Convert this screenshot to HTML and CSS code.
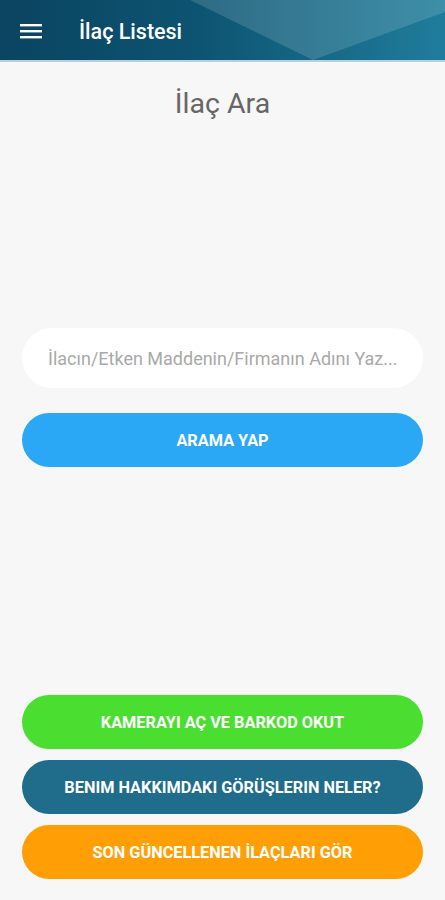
FILE: index.html
```html
<!DOCTYPE html>
<html lang="tr">
<head>
    <meta charset="UTF-8">
    <meta name="viewport" content="width=device-width, initial-scale=1.0">
    <title>İlaç Listesi</title>
    <link rel="stylesheet" href="styles.css">
</head>
<body>

    <!-- Üst bar -->
    <header class="ust_bar">
        <button class="menu_btn" aria-label="Menü">
            <svg width="22" height="16" viewBox="0 0 22 16">
                <rect x="0" y="1" width="22" height="2.4" fill="#fff"/>
                <rect x="0" y="7" width="22" height="2.4" fill="#fff"/>
                <rect x="0" y="13" width="22" height="2.4" fill="#fff"/>
            </svg>
        </button>
        <h1>İlaç Listesi</h1>
    </header>

    <main class="icerik">
        <h2 class="baslik">İlaç Ara</h2>

        <!-- Arama bölümü -->
        <div class="arama">
            <input type="text" class="arama_kutusu" placeholder="İlacın/Etken Maddenin/Firmanın Adını Yaz...">
            <button class="yuvarlak_btn mavi">ARAMA YAP</button>
        </div>

        <!-- Alt butonlar -->
        <div class="alt_butonlar">
            <button class="yuvarlak_btn yesil">KAMERAYI AÇ VE BARKOD OKUT</button>
            <button class="yuvarlak_btn petrol">BENIM HAKKIMDAKI GÖRÜŞLERIN NELER?</button>
            <button class="yuvarlak_btn turuncu">SON GÜNCELLENEN İLAÇLARI GÖR</button>
        </div>
    </main>

</body>
</html>
```

FILE: styles.css
```css
/* Genel */
body {
    font-family: Roboto, "Noto Sans", Arial, sans-serif;
    background-color: #f7f7f7;
    margin: 0;
    padding: 0;
}

.ust_bar {
    position: relative;
    height: 60px;
    display: flex;
    align-items: center;
    background: linear-gradient(90deg, #0a4460 0%, #0d5472 45%, #1f7d9b 100%);
    border-bottom: 2px solid #b7d0db;
    overflow: hidden;
}
.ust_bar::before {
    content: "";
    position: absolute;
    inset: 0;
    background: rgba(255, 255, 255, 0.14);
    clip-path: polygon(190px 0, 100% 0, 100% 12px, 313px 100%);
}
.menu_btn {
    position: relative;
    background: none;
    border: none;
    padding: 0;
    margin: 2px 0 0 20px;
    width: 22px;
    height: 16px;
    display: flex;
}
.ust_bar h1 {
    position: relative;
    margin: 2px 0 0 37px;
    font-size: 21.5px;
    font-weight: 500;
    color: #fff;
}

.icerik {
    height: 838px;
    box-sizing: border-box;
    padding: 0 22px 21px;
    display: flex;
    flex-direction: column;
}
.baslik {
    margin: 25px 0 0;
    font-size: 28.5px;
    line-height: 34px;
    font-weight: 400;
    color: #666;
    text-align: center;
}

.arama {
    display: flex;
    flex-direction: column;
    gap: 25px;
    margin-top: 207px;
}
.arama_kutusu {
    height: 60px;
    border: none;
    border-radius: 30px;
    background-color: #fff;
    padding: 0 16px 0 26px;
    font-family: inherit;
    font-size: 18px;
    color: #444;
    outline: none;
}
.arama_kutusu::placeholder {
    color: #a9a9a9;
}

.yuvarlak_btn {
    height: 54px;
    border: none;
    border-radius: 27px;
    color: #fff;
    font-family: inherit;
    font-size: 16.3px;
    font-weight: 700;
    cursor: pointer;
}
.mavi {
    background-color: #2aa8f6;
}
.yesil {
    background-color: #4ade30;
}
.petrol {
    background-color: #1f6c8b;
}
.turuncu {
    background-color: #ff9f05;
}

.alt_butonlar {
    margin-top: auto;
    display: flex;
    flex-direction: column;
    gap: 11px;
}
```
